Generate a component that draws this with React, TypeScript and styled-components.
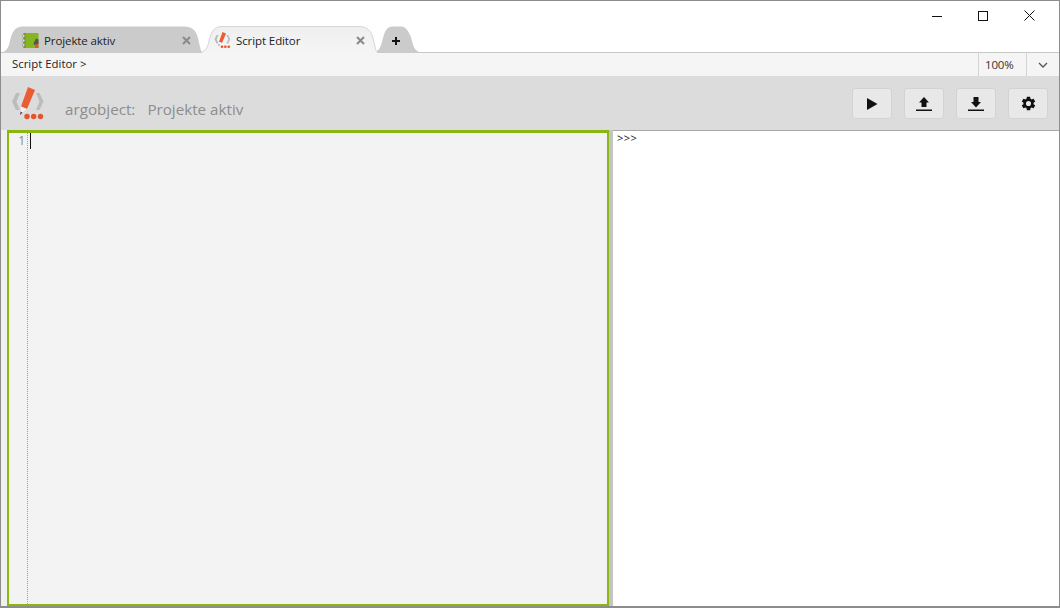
import React from "react";
import styled, { createGlobalStyle } from "styled-components";

const Global = createGlobalStyle`
  html, body { margin: 0; padding: 0; height: 100%; background: #fff; }
  body { font-family: "Open Sans", "Noto Sans", sans-serif; overflow: hidden; }
  * { box-sizing: border-box; }
`;

const Win = styled.div`
  width: 1060px;
  height: 608px;
  border: 1px solid #8c8c8c;
  border-bottom-width: 2px;
  display: flex;
  flex-direction: column;
  background: #fff;
`;

const TitleArea = styled.div`
  height: 52px;
  position: relative;
  display: flex;
  align-items: flex-end;
  padding-left: 2px;
  border-bottom: 1px solid #c8c8c8;
  flex: none;
`;

const WinControls = styled.div`
  position: absolute;
  top: 0;
  right: 7px;
  display: flex;
`;

const WinBtn = styled.div`
  width: 46px;
  height: 29px;
  display: flex;
  align-items: center;
  justify-content: center;
`;

const Tab = styled.div<{ $w: number; $pad: number }>`
  position: relative;
  width: ${(p) => p.$w}px;
  height: 27px;
  margin-bottom: -1px;
  display: flex;
  align-items: center;
  padding-left: ${(p) => p.$pad}px;
  flex: none;
`;

const TabShape = styled.svg`
  position: absolute;
  left: 0;
  top: 0;
  width: 100%;
  height: 100%;
`;

const TabIcon = styled.svg`
  position: relative;
  width: 17px;
  height: 18px;
  margin-right: 5px;
  margin-top: 1px;
  flex: none;
`;

const TabLabel = styled.span`
  position: relative;
  font-size: 11.5px;
  letter-spacing: -0.1px;
  color: #222;
  margin-top: 1px;
  white-space: nowrap;
`;

const TabClose = styled.svg<{ $right: number }>`
  position: absolute;
  right: ${(p) => p.$right}px;
  top: 10px;
  width: 9px;
  height: 9px;
`;

const PlusIcon = styled.svg`
  position: absolute;
  left: 15px;
  top: 11px;
  width: 8px;
  height: 8px;
`;

const Breadcrumb = styled.div`
  height: 23px;
  background: #f5f5f5;
  display: flex;
  align-items: center;
  flex: none;
`;

const Crumb = styled.span`
  flex: 1;
  padding-left: 11px;
  margin-bottom: 2px;
  font-size: 11.4px;
  color: #222;
`;

const Zoom = styled.span`
  width: 49px;
  height: 23px;
  border-left: 1px solid #d4d4d4;
  border-right: 1px solid #d4d4d4;
  padding-left: 6px;
  font-size: 11.5px;
  letter-spacing: -0.2px;
  line-height: 24px;
  color: #333;
`;

const ZoomArrow = styled.div`
  width: 32px;
  display: flex;
  justify-content: center;
`;

const Toolbar = styled.div`
  height: 54px;
  background: #dcdcdc;
  display: flex;
  align-items: flex-start;
  padding: 0 11px 0 10px;
  flex: none;
`;

const Logo = styled.svg`
  width: 34px;
  height: 36px;
  margin-top: 9px;
  flex: none;
`;

const Heading = styled.div`
  margin: 23px 0 0 20px;
  flex: 1;
  display: flex;
  gap: 12px;
  font-size: 15.2px;
  line-height: 20px;
  color: #8d8d8d;
`;

const Actions = styled.div`
  display: flex;
  gap: 12px;
  margin-top: 12px;
`;

const ActionBtn = styled.button`
  width: 40px;
  height: 31px;
  padding: 0;
  background: #e8e8e8;
  border: 1px solid #d3d3d3;
  border-radius: 3px;
  display: flex;
  align-items: center;
  justify-content: center;
`;

const Work = styled.div`
  flex: 1;
  display: flex;
  min-height: 0;
  background: #f0f0f0;
  padding-left: 6px;
`;

const Editor = styled.div`
  width: 602px;
  border: 2px solid #8ab80f;
  border-top-width: 3px;
  background: #f3f3f3;
  display: flex;
  flex: none;
`;

const Gutter = styled.div`
  width: 19px;
  margin-right: 2px;
  border-right: 1px dotted #a0a0a0;
  text-align: right;
  padding-right: 2px;
  font-size: 12px;
  line-height: 16px;
  color: #858585;
  flex: none;
`;

const Caret = styled.div`
  width: 1px;
  height: 16px;
  background: #111;
`;

const Splitter = styled.div`
  width: 4px;
  background: #c4c4c4;
  flex: none;
`;

const Output = styled.div`
  flex: 1;
  background: #fff;
  border-top: 1px solid #a8a8a8;
  padding: 0 4px;
  font-size: 11px;
  line-height: 14px;
  letter-spacing: 0.5px;
  color: #222;
`;

const tabPath = (w: number, h = 27) =>
  `M0 ${h - 1} C3 ${h - 2} 5 ${h - 5} 6 ${h - 8} C8 ${h - 15} 9 1 19 .5 L${w - 17} .5 C${w - 9} 1 ${w - 6} 6 ${w - 5} 9 C${w - 3} ${h - 13} ${w - 2} ${h - 3} ${w} ${h - 1} V${h} H0`;

const PencilMark = () => (
  <>
    <path d="M5 8 L9 8 L5.5 16.5 L9 25 L5 25 L1 16.5Z" fill="#bcbcbc" />
    <path d="M25 8 L28.5 8 L32.5 16.5 L28.5 25 L25 25 L28.5 16.5Z" fill="#bcbcbc" />
    <path d="M17 2 L24 5 L16 24 L10 21.5Z" fill="#ea5c33" />
    <path d="M10 21.5 L16 24 L9.5 29Z" fill="#f2f2f2" />
    <path d="M9.6 26.5 L11.5 27.8 L9 30Z" fill="#444" />
    <circle cx="16" cy="31.5" r="2.7" fill="#e4552c" />
    <circle cx="22.7" cy="31.5" r="2.7" fill="#e4552c" />
    <circle cx="29.5" cy="31.5" r="2.7" fill="#e4552c" />
  </>
);

const CloseGlyph = ({ right }: { right: number }) => (
  <TabClose $right={right} viewBox="0 0 9 9">
    <path d="M1 1 L8 8 M8 1 L1 8" stroke="#8a8a8a" strokeWidth="2.1" fill="none" />
  </TabClose>
);

export default function App() {
  return (
    <>
      <Global />
      <Win>
        <TitleArea>
          <Tab $w={199} $pad={19}>
            <TabShape viewBox="0 0 199 27" preserveAspectRatio="none">
              <path d={tabPath(199) + " Z"} fill="#cbcbcb" />
            </TabShape>
            <TabIcon viewBox="0 0 17 18">
              <rect x="1.5" y="2" width="15" height="15" rx="1" fill="#86b51f" />
              <path d="M1.5 2 h2 v15 h-2z" fill="#6f9a1a" />
              <circle cx="1.5" cy="5" r="1.4" fill="#ddd" stroke="#777" strokeWidth=".5" />
              <circle cx="1.5" cy="9.5" r="1.4" fill="#ddd" stroke="#777" strokeWidth=".5" />
              <circle cx="1.5" cy="14" r="1.4" fill="#ddd" stroke="#777" strokeWidth=".5" />
              <path d="M14 7.5 L16.5 8.5 L16.5 13 L12 14 L11.5 12.5Z" fill="#555" />
              <path d="M13 13.5 h3.5 v3.5 h-3.5z" fill="#e4552c" />
            </TabIcon>
            <TabLabel>Projekte aktiv</TabLabel>
            <CloseGlyph right={11} />
          </Tab>
          <Tab $w={175} $pad={12}>
            <TabShape viewBox="0 0 175 27" preserveAspectRatio="none">
              <defs>
                <linearGradient id="activeTab" x1="0" y1="0" x2="0" y2="1">
                  <stop offset="0" stopColor="#efefef" />
                  <stop offset="1" stopColor="#f5f5f5" />
                </linearGradient>
              </defs>
              <path d={tabPath(175) + " Z"} fill="url(#activeTab)" />
              <path
                d="M0 26 C3 25 5 22 6 19 C8 12 9 1 19 .5 L158 .5 C166 1 169 6 170 9 C172 14 173 24 175 26"
                fill="none"
                stroke="#d6d6d6"
              />
            </TabShape>
            <TabIcon viewBox="0 0 34 36">
              <PencilMark />
            </TabIcon>
            <TabLabel>Script Editor</TabLabel>
            <CloseGlyph right={12} />
          </Tab>
          <Tab $w={43} $pad={0}>
            <TabShape viewBox="0 0 43 27" preserveAspectRatio="none">
              <path
                d="M0 25 C3 23 4 20 6 12 C8 4 11 .5 15 .5 L24 .5 C29 .5 31 5 34 11 C36 19 37 25 43 26 V27 H0Z"
                fill="#cbcbcb"
              />
            </TabShape>
            <PlusIcon viewBox="0 0 8 8">
              <path d="M4 0 V8 M0 4 H8" stroke="#111" strokeWidth="2" fill="none" />
            </PlusIcon>
          </Tab>
          <WinControls>
            <WinBtn>
              <svg width="10" height="10" viewBox="0 0 10 10">
                <path d="M0 5.5 H10" stroke="#111" strokeWidth="1" />
              </svg>
            </WinBtn>
            <WinBtn>
              <svg width="10" height="10" viewBox="0 0 10 10">
                <rect x=".5" y=".5" width="9" height="9" fill="none" stroke="#111" />
              </svg>
            </WinBtn>
            <WinBtn>
              <svg width="11" height="11" viewBox="0 0 11 11">
                <path d="M.5 .5 L10.5 10.5 M10.5 .5 L.5 10.5" stroke="#111" strokeWidth="1" />
              </svg>
            </WinBtn>
          </WinControls>
        </TitleArea>
        <Breadcrumb>
          <Crumb>Script Editor &gt;</Crumb>
          <Zoom>100%</Zoom>
          <ZoomArrow>
            <svg width="10" height="6" viewBox="0 0 10 6">
              <path d="M1 1 L5 5 L9 1" fill="none" stroke="#555" strokeWidth="1.3" />
            </svg>
          </ZoomArrow>
        </Breadcrumb>
        <Toolbar>
          <Logo viewBox="0 0 34 36">
            <PencilMark />
          </Logo>
          <Heading>
            <span>argobject:</span>
            <span>Projekte aktiv</span>
          </Heading>
          <Actions>
            <ActionBtn aria-label="Run">
              <svg width="12" height="12" viewBox="0 0 12 12">
                <path d="M1 0 L11.5 6 L1 12Z" fill="#111" />
              </svg>
            </ActionBtn>
            <ActionBtn aria-label="Upload">
              <svg width="16" height="16" viewBox="0 0 16 16">
                <path d="M8 1 L13 6.5 H10.5 V11 H5.5 V6.5 H3Z M0 13.5 H16 V15 H0Z" fill="#111" />
              </svg>
            </ActionBtn>
            <ActionBtn aria-label="Download">
              <svg width="16" height="16" viewBox="0 0 16 16">
                <path d="M5.5 1 H10.5 V6 H13 L8 11.5 L3 6 H5.5Z M0 13.5 H16 V15 H0Z" fill="#111" />
              </svg>
            </ActionBtn>
            <ActionBtn aria-label="Settings">
              <svg width="17" height="17" viewBox="0 0 24 24">
                <path
                  fill="#111"
                  d="M19.14 12.94c.04-.3.06-.61.06-.94s-.02-.64-.07-.94l2.03-1.58a.5.5 0 0 0 .12-.64l-1.92-3.32a.5.5 0 0 0-.6-.22l-2.39.96a7 7 0 0 0-1.62-.94l-.36-2.54a.48.48 0 0 0-.48-.41h-3.84a.48.48 0 0 0-.47.41l-.36 2.54c-.59.24-1.13.57-1.62.94l-2.39-.96a.49.49 0 0 0-.6.22L2.74 8.84a.48.48 0 0 0 .12.64l2.03 1.58c-.05.3-.09.63-.09.94s.02.64.07.94l-2.03 1.58a.5.5 0 0 0-.12.64l1.92 3.32c.12.22.37.29.6.22l2.39-.96c.5.38 1.03.7 1.62.94l.36 2.54c.05.24.24.41.48.41h3.84c.24 0 .44-.17.47-.41l.36-2.54a7 7 0 0 0 1.62-.94l2.39.96c.22.08.47 0 .59-.22l1.92-3.32a.48.48 0 0 0-.12-.64l-2.01-1.58ZM12 15.6A3.6 3.6 0 1 1 12 8.4a3.6 3.6 0 0 1 0 7.2Z"
                />
              </svg>
            </ActionBtn>
          </Actions>
        </Toolbar>
        <Work>
          <Editor>
            <Gutter>1</Gutter>
            <Caret />
          </Editor>
          <Splitter />
          <Output>&gt;&gt;&gt;</Output>
        </Work>
      </Win>
    </>
  );
}
